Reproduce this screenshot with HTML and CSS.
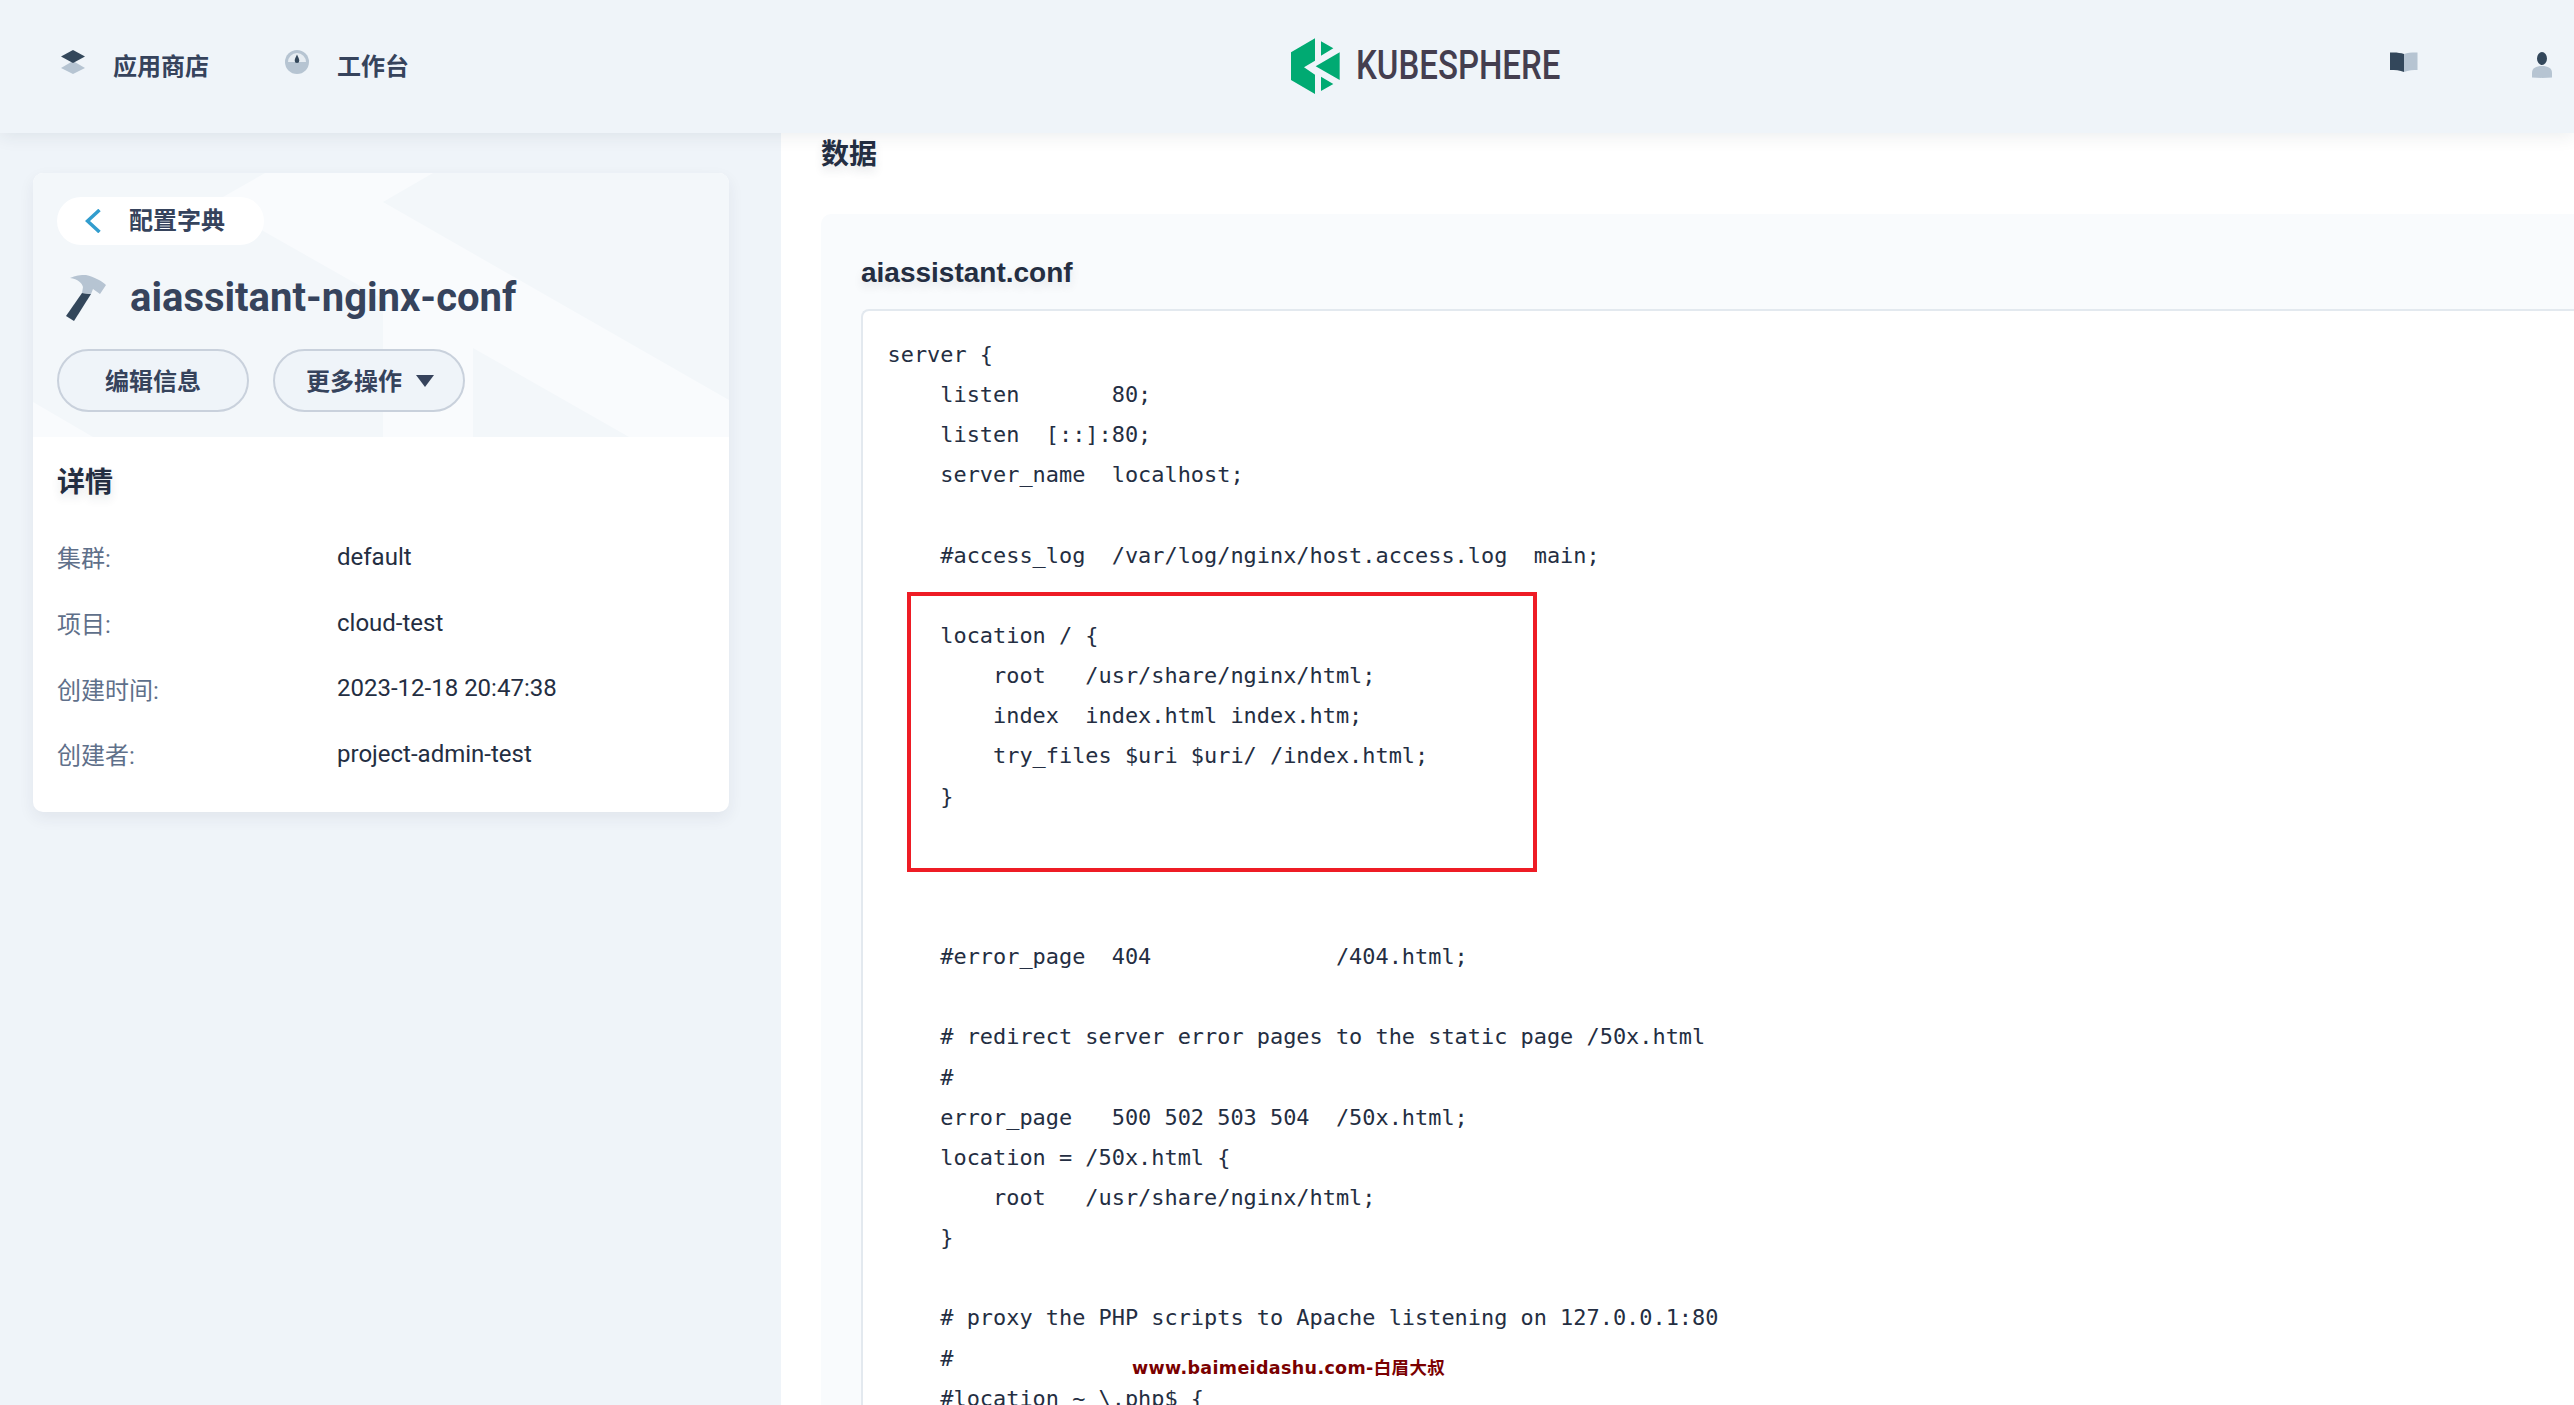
FILE: index.html
```html
<!DOCTYPE html>
<html lang="zh">
<head>
<meta charset="utf-8">
<title>aiassitant-nginx-conf</title>
<link rel="stylesheet" href="styles.css">
</head>
<body>
<header class="topbar">
  <nav class="nav">
    <a class="nav-item">
      <svg class="icon" width="24" height="24" viewBox="0 0 24 24"><path class="ic-light" d="M0 18 12 11 24 18 12 24z"/><path class="ic-dark" d="M12 0 24 6.500 12 13 0 6.500z"/></svg>
      <span>应用商店</span>
    </a>
    <a class="nav-item nav-second">
      <svg class="icon" width="24" height="24" viewBox="0 0 24 24"><circle class="ic-light" cx="12" cy="12" r="12"/><path class="ic-pale" d="M3 12a9 9 0 0 1 18 0z"/><path class="ic-dark" d="M12 4.500c1 2.500 2.300 4.300 2.300 6.200a2.300 2.300 0 0 1-4.600 0c0-1.900 1.300-3.700 2.300-6.200z"/></svg>
      <span>工作台</span>
    </a>
  </nav>
  <div class="logo">
    <svg width="49" height="56" viewBox="123 82 147 168"><path class="ic-green" d="M195 83 123 125V208L195 250V192L162 170 195 150zM213 92 250 113 213 135zM269 125V208L197 167zM213 198 250 220 213 241z"/></svg>
    <span class="logo-text">KUBESPHERE</span>
  </div>
  <div class="top-right">
    <svg width="28" height="20" viewBox="0 0 28 20"><path class="ic-light" d="M14 2C18 .6 24 .4 27.500.6V18C24 18 18 18.300 14 20z"/><path class="ic-dark" d="M0 .6C5 .2 10 .6 14 2V20C10 18.300 5 18 0 18z"/></svg>
    <svg width="20" height="26" viewBox="0 0 20 26"><path class="ic-light" d="M0 21C0 16 4 14 10 14S20 16 20 21V25.500C14 26 6 26 0 25.500z"/><ellipse class="ic-dark" cx="10" cy="6.500" rx="5" ry="6.500"/></svg>
  </div>
</header>

<main class="layout">
  <aside class="side">
    <section class="card">
      <div class="hero">
        <svg class="hero-art" width="696" height="264" viewBox="0 0 696 264"><path d="M232 0H400L350 29 696 227V264H596L440 175V264H350V126L232 59 190 34V24zM0 229 60 264H0z"/></svg>
        <a class="back"><svg width="16" height="24" viewBox="0 0 16 24"><path class="ic-back" d="M14.500 1 2.500 12 14.500 23"/></svg><span>配置字典</span></a>
        <div class="title-row">
          <svg width="40" height="46" viewBox="0 0 40 46"><path class="ic-dark" d="M16 18 25 19 8 46 0 41z"/><path class="ic-light" d="M4 3C9 .5 15 0 20 0 28 2 36 6 40 10L34 19 27 14 25 19 16 18 17 12C16 8 12 4 4 3z"/></svg>
          <h1>aiassitant-nginx-conf</h1>
        </div>
        <div class="actions">
          <button class="btn"><span class="btn-label">编辑信息</span></button>
          <button class="btn btn-more"><span class="btn-label">更多操作</span><i class="caret"></i></button>
        </div>
      </div>
      <div class="details">
        <h2 class="heading">详情</h2>
        <dl class="props">
          <div class="prop"><dt>集群:</dt><dd>default</dd></div>
          <div class="prop"><dt>项目:</dt><dd>cloud-test</dd></div>
          <div class="prop"><dt>创建时间:</dt><dd>2023-12-18 20:47:38</dd></div>
          <div class="prop"><dt>创建者:</dt><dd>project-admin-test</dd></div>
        </dl>
      </div>
    </section>
  </aside>

  <section class="content">
    <h2 class="heading data-title">数据</h2>
    <div class="data-box">
      <h3 class="file-name">aiassistant.conf</h3>
      <pre class="code">server {
    listen       80;
    listen  [::]:80;
    server_name  localhost;

    #access_log  /var/log/nginx/host.access.log  main;

    location / {
        root   /usr/share/nginx/html;
        index  index.html index.htm;
        try_files $uri $uri/ /index.html;
    }



    #error_page  404              /404.html;

    # redirect server error pages to the static page /50x.html
    #
    error_page   500 502 503 504  /50x.html;
    location = /50x.html {
        root   /usr/share/nginx/html;
    }

    # proxy the PHP scripts to Apache listening on 127.0.0.1:80
    #
    #location ~ \.php$ {
}</pre>
    </div>
  </section>
</main>

<div class="redbox"></div>
<div class="watermark">www.baimeidashu.com-白眉大叔</div>
</body>
</html>
```
FILE: styles.css
```css
* { box-sizing: border-box; }
html, body { margin: 0; height: 100%; }
body {
  height: 100vh;
  overflow: hidden;
  display: flex;
  flex-direction: column;
  background: #eff4f9;
  color: #242e42;
  font-family: Roboto, "Noto Sans CJK SC", sans-serif;
  position: relative;
}
.ic-dark { fill: #33475b; }
.ic-light { fill: #b6c4d2; }
.ic-pale { fill: #e6ecf2; }
.ic-green { fill: #00aa72; }
.ic-back { fill: none; stroke: #329dce; stroke-width: 3.500; }

.topbar {
  flex: none;
  height: 133px;
  display: flex;
  align-items: center;
  padding: 0 22px 0 61px;
  background: #eff4f9;
  box-shadow: 0 4px 16px rgba(36, 46, 66, 0.08);
  position: relative;
  z-index: 2;
}
.nav { display: flex; flex: none; width: 348px; }
.nav-item { display: flex; flex: none; align-items: center; font-size: 24px; font-weight: 700; color: #36435c; line-height: 34px; white-space: nowrap; }
.nav-item .icon { flex: none; margin: -10px 28px 0 0; }
.nav-second { margin-left: 76px; }
.logo { display: flex; flex: none; align-items: center; gap: 16px; margin: -1px 0 0 882px; }
.logo-text {
  display: inline-block;
  width: 204px;
  white-space: nowrap;
  font-size: 40px;
  line-height: 46px;
  font-weight: 500;
  color: #443e4f;
  transform: scaleX(0.825);
  transform-origin: 0 50%;
}
.top-right { margin-left: auto; display: flex; align-items: flex-start; gap: 114px; padding-bottom: 4px; }

.layout { flex: 1; min-height: 0; display: flex; }
.side { flex: none; width: 781px; padding: 40px 52px 0 33px; }
.card {
  border-radius: 10px;
  background: #fff;
  box-shadow: 0 6px 16px rgba(36, 46, 66, 0.07);
  overflow: hidden;
}
.hero { position: relative; height: 264px; padding: 24px 24px 0; background: #f3f7fa; }
.hero-art { position: absolute; left: 0; top: 0; fill: #f9fbfd; }
.back {
  position: relative;
  display: inline-flex;
  align-items: center;
  width: 207px;
  height: 48px;
  padding-left: 28px;
  border-radius: 24px;
  background: #fff;
  font-size: 24px;
  line-height: 44px;
  font-weight: 700;
  color: #36435c;
}
.back span { margin-left: 28px; margin-top: -1px; }
.title-row { position: relative; display: flex; align-items: center; gap: 24px; height: 52px; margin: 27px 0 0 9px; }
.title-row h1 { margin: 0; font-size: 40px; line-height: 52px; font-weight: 700; color: #36435c; }
.actions { position: relative; display: flex; gap: 24px; margin-top: 25px; }
.btn {
  width: 192px;
  height: 63px;
  padding: 0;
  border: 2px solid #c9d1dc;
  border-radius: 32px;
  background: #eff4f9;
  font: 700 24px Roboto, "Noto Sans CJK SC", sans-serif;
  color: #36435c;
  display: flex;
  align-items: center;
  justify-content: center;
}
.btn-label { margin-top: -3px; }
.btn-more { gap: 14px; padding-left: 2px; }
.caret { width: 0; height: 0; border-left: 9px solid transparent; border-right: 9px solid transparent; border-top: 12px solid #36435c; }

.details { padding: 27px 24px 25px; }
.heading {
  margin: 0;
  font-size: 28px;
  line-height: 38px;
  font-weight: 700;
  color: #242e42;
  text-shadow: 0 5px 10px rgba(36, 46, 66, 0.12);
}
.props { margin: 22px 0 0; }
.prop { display: flex; align-items: center; height: 65.700px; font-size: 24px; }
.prop dt { width: 280px; color: #5f708a; }
.prop dd { margin: 0; color: #242e42; }

.content { flex: 1; min-width: 0; background: #fff; padding: 3px 0 0 40px; }
.data-title { line-height: 38px; }
.data-box {
  margin-top: 40px;
  padding: 38px 0 0 40px;
  border-radius: 10px 0 0 0;
  background: #f9fbfd;
}
.file-name {
  margin: 0 0 15px;
  font: 700 28px/42px "Liberation Sans", Arial, sans-serif;
  color: #242e42;
  text-shadow: 0 5px 10px rgba(36, 46, 66, 0.1);
}
.code {
  margin: 0;
  padding: 24px 0 0 24.500px;
  height: 1200px;
  border: 2px solid #e3e9ef;
  border-right: 0;
  border-radius: 8px 0 0 0;
  background: #fff;
  font: 400 21.910px/40.140px "DejaVu Sans Mono", monospace;
  color: #242e42;
}

.redbox {
  position: absolute;
  left: 907px;
  top: 592px;
  width: 630px;
  height: 280px;
  border: 4px solid #ee1c25;
}
.watermark {
  position: absolute;
  left: 1132px;
  top: 1356px;
  white-space: nowrap;
  font: 700 17.500px/24px "DejaVu Sans", "Noto Sans CJK SC", sans-serif;
  letter-spacing: 0.35px;
  color: #7a0000;
}
```
